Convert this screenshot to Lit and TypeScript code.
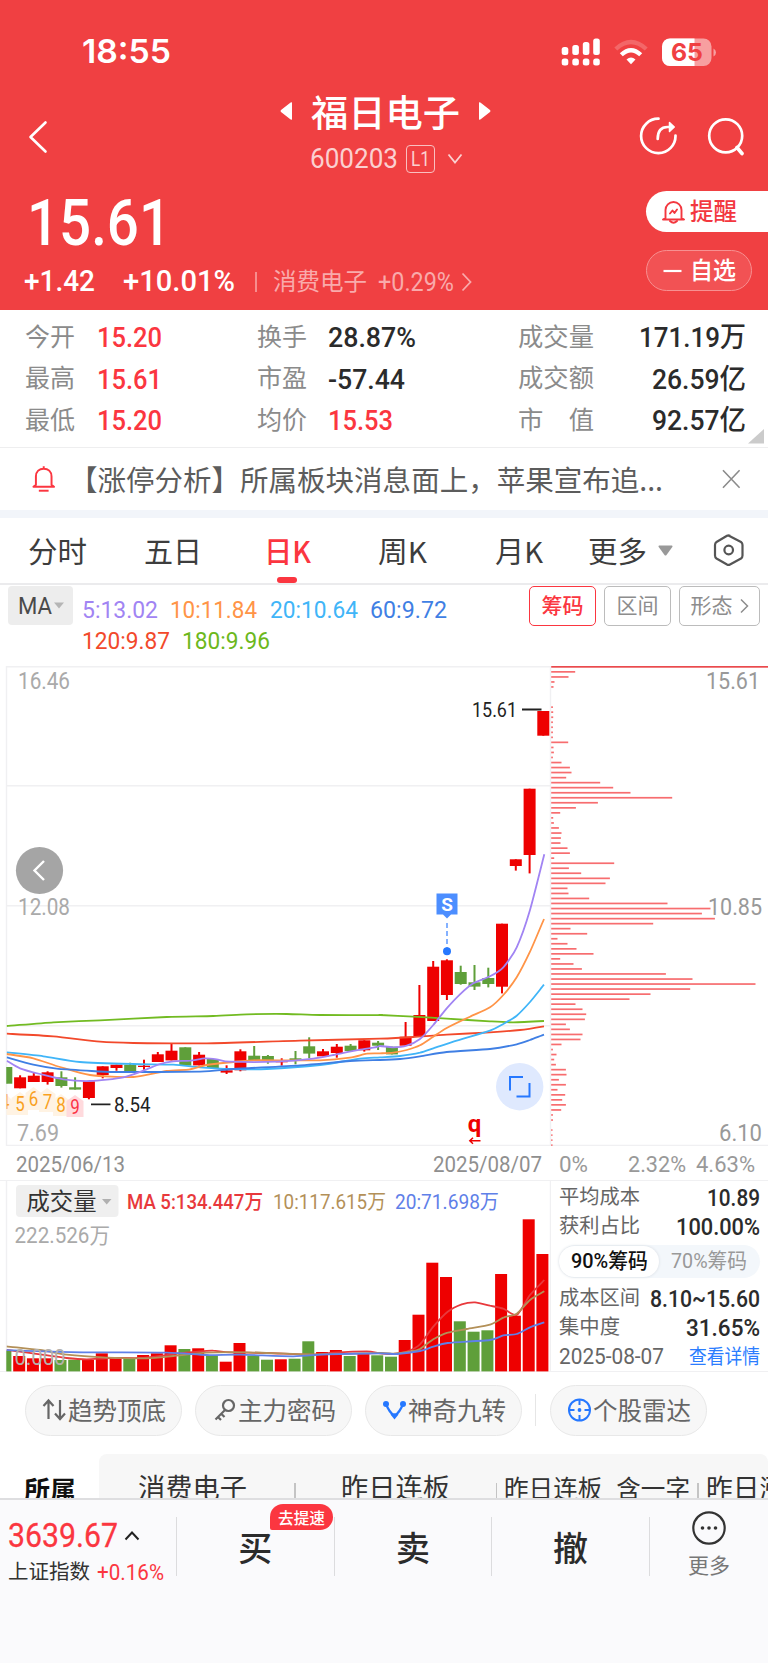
import { LitElement, html, svg, css } from "lit";
import { customElement, property, query } from "lit/decorators.js";

/** One line of text, condensed or widened to an exact advance width. */
@customElement("fit-text")
class FitText extends LitElement {
  static styles = css`
    :host { display: inline-block; white-space: nowrap; flex: none; }
    .t { display: inline-block; transform-origin: left center; white-space: pre; }
  `;
  @property({ type: Number }) w = 0;
  @property() text = "";
  @query(".t") span!: HTMLElement;
  updated() {
    const natural = this.span.getBoundingClientRect().width / (this.scale || 1);
    if (natural && this.w) {
      this.scale = this.w / natural;
      this.span.style.transform = `scaleX(${this.scale})`;
      this.span.style.width = `${this.w}px`;
    }
  }
  private scale = 1;
  render() {
    return html`<span class="t">${this.text}</span>`;
  }
}

const t = (text: string, w: number, cls = "") => html`<fit-text class=${cls} .w=${w} .text=${text}></fit-text>`;

type Candle = [up: number, top: number, bottom: number, high: number, low: number];

const PITCH = 13.77;
const cx = (i: number) => 6.3 + i * PITCH;

const A = (up: number, t: number, b: number, h = t, l = b): Candle => [up, 990 + t / 3, 990 + b / 3, 990 + h / 3, 990 + l / 3];
const B = (up: number, t: number, b: number, h = t, l = b): Candle => [up, 900 + t / 3, 900 + b / 3, 900 + h / 3, 900 + l / 3];
const C = (up: number, t: number, b: number, h = t, l = b): Candle => [up, 660 + t / 3, 660 + b / 3, 660 + h / 3, 660 + l / 3];

const candles: Candle[] = [
  A(0, 231, 281), A(1, 262, 295, 256), A(1, 257, 276, 247), A(1, 247, 276, 244, 284), A(0, 262, 288, 244, 293),
  A(0, 292, 299, 262), A(1, 274, 324, 274, 328), A(1, 229, 255, 229, 265), A(1, 224, 234, 224, 242), A(0, 224, 246, 218),
  A(1, 227, 231, 209, 239), A(1, 193, 216, 186), A(1, 182, 211, 161), A(0, 172, 227), A(1, 194, 226, 186),
  A(0, 207, 234), A(1, 241, 248, 226, 252), A(1, 184, 241, 178, 244), A(0, 197, 210, 168), A(0, 198, 213, 195, 221),
  A(1, 213, 217, 205, 227), A(0, 205, 211, 183, 223), A(0, 169, 191, 142, 205), A(1, 184, 199, 177), A(1, 170, 189, 162, 203),
  A(0, 167, 183, 162), A(1, 151, 181, 151, 185), A(0, 158, 167, 153, 180), A(0, 170, 193),
  B(1, 410, 437, 366), B(1, 345, 410, 255), B(1, 200, 363, 183), B(1, 181, 285, 178, 300), B(0, 216, 252, 197, 254),
  B(0, 247, 260, 195, 270), B(0, 234, 252, 203, 262), B(1, 71, 260, 71, 280),
  C(1, 598, 618, 598, 632), C(1, 386, 585, 386, 640), C(1, 153, 227),
];

type P = [number, number];
const left = (y0: number, pts: P[]): P[] => pts.map(([x, y]) => [x / 3, y0 + y / 3]);
const right = (y0: number, pts: P[]): P[] => pts.map(([x, y]) => [380 + x / 3, y0 + y / 3]);

/** Catmull-Rom path through the points, with a low tension. */
const smooth = (p: P[]) => {
  let d = `M${p[0][0].toFixed(1)} ${p[0][1].toFixed(1)}`;
  for (let i = 0; i < p.length - 1; i++) {
    const a = p[Math.max(0, i - 1)], b = p[i], c = p[i + 1], e = p[Math.min(p.length - 1, i + 2)];
    const k = 0.12;
    d += `C${(b[0] + (c[0] - a[0]) * k).toFixed(1)} ${(b[1] + (c[1] - a[1]) * k).toFixed(1)} ${(c[0] - (e[0] - b[0]) * k).toFixed(1)} ${(c[1] - (e[1] - b[1]) * k).toFixed(1)} ${c[0].toFixed(1)} ${c[1].toFixed(1)}`;
  }
  return d;
};

const maLines: { color: string; pts: P[] }[] = [
  { color: "#72bb22", pts: [...left(990, [[20, 108], [160, 97], [300, 91], [500, 81], [640, 78], [740, 73], [860, 72], [960, 75], [1140, 75]]), ...right(900, [[0, 345], [100, 350], [200, 356], [330, 364], [400, 367], [492, 363]])] },
  { color: "#f2492b", pts: [...left(990, [[20, 131], [160, 139], [300, 155], [400, 159], [620, 160], [900, 152]]), ...right(900, [[0, 416], [100, 411], [200, 404], [330, 397], [420, 390], [492, 379]])] },
  { color: "#40b5f8", pts: [...left(990, [[20, 187], [130, 199], [240, 216], [400, 222], [520, 224], [600, 232], [700, 237], [800, 237], [960, 225], [1080, 206]]), ...right(900, [[0, 472], [60, 468], [120, 458], [160, 445], [230, 422], [330, 392], [370, 372], [410, 347], [450, 306], [492, 254]])] },
  { color: "#ff9447", pts: [...left(990, [[20, 192], [100, 205], [180, 231], [270, 255], [400, 261], [500, 243], [570, 238], [620, 225], [700, 216], [760, 211], [960, 211], [1050, 203], [1100, 191]]), ...right(900, [[0, 460], [40, 458], [80, 450], [120, 436], [160, 410], [200, 384], [270, 350], [330, 322], [370, 285], [410, 232], [450, 155], [492, 57]])] },
  { color: "#3f7fe4", pts: [...left(990, [[20, 202], [100, 224], [170, 236], [260, 242], [350, 246], [600, 245], [700, 237], [900, 226], [1050, 213]]), ...right(900, [[0, 480], [60, 477], [120, 469], [200, 456], [330, 447], [410, 433], [450, 420], [492, 404]])] },
  { color: "#a184f3", pts: [...left(990, [[20, 212], [60, 235], [120, 252], [190, 268], [270, 273], [370, 262], [430, 242], [480, 222], [520, 214], [570, 212], [615, 205], [650, 208], [690, 215], [830, 215], [940, 206], [1000, 195], [1080, 179], [1130, 171]]), ...right(900, [[0, 438], [40, 442], [80, 437], [120, 417], [160, 375], [200, 325], [240, 283], [280, 250], [330, 229], [370, 202], [410, 142], [450, 30]]), [544.3, 854.3]] },
];

const chips = [
  1170, 586, 566, 524, 521, 0, 0, 0, 519, 520, 520, 519, 519, 519, 519, 565, 521, 522, 519, 545, 570, 575, 559, 661, 700, 752, 877, 654, 588, 541,
  520, 522, 537, 545, 543, 542, 563, 570, 523, 703, 567, 604, 690, 677, 563, 566, 628, 863, 992, 966, 1005, 820, 572, 622, 533, 563, 590, 641, 541, 581,
  606, 858, 938, 1127, 931, 812, 749, 587, 608, 619, 615, 558, 570, 608, 602, 545, 519, 530, 523, 528, 558, 560, 537, 558, 533, 556, 547, 558, 544, 519,
  519, 0, 518, 518, 518, 518,
];

const volumes: number[] = [
  572, 588, 595, 595, 600, 599, 600, 580, 597, 597, 585, 580, 556, 567, 565, 586, 605, 549, 587, 599, 598, 596, 544, 576, 570, 588, 582, 586, 590,
  540, 464, 308, 351, 484, 515, 511, 342, 467, 178, 282,
].map((v) => 1160 + v / 3);

const volLines: { color: string; pts: P[] }[] = [
  { color: "#e8393c", pts: [...left(1160, [[20, 570], [60, 575], [120, 583], [200, 594], [260, 598], [330, 594], [420, 594], [480, 588], [520, 582], [600, 574], [640, 572], [690, 577], [800, 579], [940, 584], [1000, 578], [1100, 574]]), ...right(1150, [[0, 610], [40, 612], [80, 605], [120, 583], [160, 530], [203, 485], [245, 463], [285, 457], [330, 467], [370, 476], [410, 495], [450, 435], [493, 390]])] },
  { color: "#b39058", pts: [...left(1160, [[20, 559], [120, 570], [200, 584], [320, 593], [440, 595], [520, 588], [620, 578], [740, 577], [940, 583]]), ...right(1150, [[0, 609], [40, 611], [90, 605], [120, 597], [160, 568], [203, 548], [260, 537], [330, 524], [370, 503], [410, 491], [450, 450], [493, 424]])] },
  { color: "#5f80e8", pts: [...left(1160, [[20, 570], [60, 572], [250, 577], [500, 578], [620, 585], [720, 584], [880, 589], [980, 583]]), ...right(1150, [[0, 610], [50, 612], [120, 603], [160, 590], [203, 579], [330, 570], [370, 556], [410, 552], [450, 532], [493, 517]])] },
];

const RED = "#ee0000";
const GREEN = "#5f9f3a";

const klineChart = () => html`<svg class="block" width="768" height="480" viewBox="0 666 768 480">
  <path d="M6.5 666V1146M550.5 666V1146M6 666.8H551M6 785.8H551M6 905.8H551M6 1025.8H551M6 1145.5H768" stroke="#f0f0f2" stroke-width="1.4" fill="none" />
  ${chips.map((e, i) => (e ? svg`<rect x="551.2" y=${(666 + i * 5.035).toFixed(1)} width=${((e - 514) / 3).toFixed(1)} height="1.7" fill=${i === 0 ? "#ea4a4d" : "#f76d6f"} />` : null))}
  <g class="num" font-size="23" fill="#aaaaaa">
    <text x="18" y="688.5" textLength="52" lengthAdjust="spacingAndGlyphs">16.46</text>
    <text x="18" y="915" textLength="52" lengthAdjust="spacingAndGlyphs">12.08</text>
    <text x="17" y="1141" textLength="42" lengthAdjust="spacingAndGlyphs">7.69</text>
    <text x="706" y="689" textLength="54" lengthAdjust="spacingAndGlyphs" fill="#999">15.61</text>
    <text x="708" y="915" textLength="54" lengthAdjust="spacingAndGlyphs" fill="#999">10.85</text>
    <text x="719" y="1141" textLength="43" lengthAdjust="spacingAndGlyphs" fill="#999">6.10</text>
  </g>
  <clipPath id="plot"><rect x="6.5" y="660" width="545" height="490" /></clipPath>
  <g clip-path="url(#plot)">
    ${candles.map(([up, top, bottom, high, low], i) => svg`
      <rect x=${(cx(i) - 1).toFixed(1)} y=${high.toFixed(1)} width="2" height=${(low - high).toFixed(1)} fill=${up ? RED : GREEN} />
      <rect x=${(cx(i) - 6).toFixed(1)} y=${top.toFixed(1)} width="12" height=${(bottom - top).toFixed(1)} fill=${up ? RED : GREEN} />`)}
    <g fill="#fff3e3">
      <path d="M-1 1100L6 1094L12 1100V1115H-1Z" />
      <path d="M11.5 1098L20 1092L28 1098V1115H11.5Z" />
      <path d="M25.5 1093L33.5 1087L41.5 1093V1110H25.5Z" />
      <path d="M39 1094L47 1088L55.500 1094V1112H39Z" />
      <path d="M53 1100L61 1094L69 1100V1116H53Z" />
      <path d="M66.500 1101L75 1095L83.500 1101V1117H66.500Z" fill="#ffdadd" />
    </g>
    <g class="num" font-size="20.500" fill="#f9a11e">
      <text x="0" y="1108.500" textLength="9.500" lengthAdjust="spacingAndGlyphs">4</text>
      <text x="15.200" y="1110.500" textLength="9.500" lengthAdjust="spacingAndGlyphs">5</text>
      <text x="28.800" y="1106" textLength="9.500" lengthAdjust="spacingAndGlyphs">6</text>
      <text x="42.800" y="1108.500" textLength="9.500" lengthAdjust="spacingAndGlyphs">7</text>
      <text x="56.200" y="1111.500" textLength="9.500" lengthAdjust="spacingAndGlyphs">8</text>
      <text x="70.200" y="1113.500" textLength="9.500" lengthAdjust="spacingAndGlyphs" fill="#fb3345">9</text>
    </g>
    ${maLines.map((l) => svg`<path d=${smooth(l.pts)} fill="none" stroke=${l.color} stroke-width="1.8" stroke-linejoin="round" />`)}
  </g>
  <path d="M91 1104.400H110.500M522 709.500H541.500" stroke="#222" stroke-width="1.800" />
  <g class="num" font-size="21" fill="#222">
    <text x="114" y="1112" textLength="36.500" lengthAdjust="spacingAndGlyphs">8.54</text>
    <text x="472" y="717" textLength="45" lengthAdjust="spacingAndGlyphs">15.61</text>
  </g>
  <circle cx="39.500" cy="870.500" r="23.600" fill="#a5a5a5" />
  <path d="M44 861L34.500 870.500L44 880" stroke="#fff" stroke-width="2.400" fill="none" />
  <path d="M436.500 893.500H457.500V914.500H451L447 918.500L443 914.500H436.500Z" fill="#4c8eff" />
  <text class="num" x="447" y="911" font-size="19" font-weight="700" fill="#fff" text-anchor="middle">S</text>
  <path d="M447 923V948" stroke="#5c98ff" stroke-width="1.500" stroke-dasharray="5 3" />
  <circle cx="447" cy="951.300" r="4" fill="#2678ff" />
  <circle cx="519.700" cy="1086.700" r="23.700" fill="#dfe9fe" />
  <path d="M510 1090.500V1077H523M516.500 1096.500H529.500V1083" stroke="#2678ff" stroke-width="2" fill="none" />
  <text class="num" x="474.500" y="1132" font-size="24" font-weight="700" fill=${RED} text-anchor="middle">q</text>
  <path d="M480.500 1140.800H470M473 1137.800L469.800 1140.800L473 1143.800" stroke=${RED} stroke-width="1.500" fill="none" />
</svg>`;

const volumeChart = () => html`<svg class="block" width="551" height="191" viewBox="0 1181 551 191">
  <path d="M6.500 1181V1372M550.500 1181V1372" stroke="#f0f0f2" stroke-width="1.400" />
  <clipPath id="vplot"><rect x="6.300" y="1181" width="545" height="191" /></clipPath>
  <g clip-path="url(#vplot)">
    ${volumes.map((y, i) => svg`<rect x=${(cx(i) - 6.9).toFixed(1)} y=${y.toFixed(1)} width="12" height=${(1371.4 - y).toFixed(1)} fill=${candles[i][0] ? RED : GREEN} />`)}
    ${volLines.map((l) => svg`<path d=${smooth(l.pts)} fill="none" stroke=${l.color} stroke-width="1.800" stroke-linejoin="round" />`)}
  </g>
  <rect x="16" y="1185" width="102.500" height="32" rx="4" fill="#efefef" />
  <path d="M102 1199H111.500L106.700 1204.500Z" fill="#b0b0b0" />
  <text class="cjk" x="26.500" y="1209.500" font-size="23.500" fill="#333" textLength="70" lengthAdjust="spacingAndGlyphs">成交量</text>
  <g class="mix" font-size="20.500">
    <text x="127" y="1209" fill="#e8393c" font-weight="500" textLength="136" lengthAdjust="spacingAndGlyphs">MA 5:134.447万</text>
    <text x="273" y="1209" fill="#b39058" textLength="113" lengthAdjust="spacingAndGlyphs">10:117.615万</text>
    <text x="395" y="1209" fill="#5f80e8" textLength="104" lengthAdjust="spacingAndGlyphs">20:71.698万</text>
    <text x="14.500" y="1243" font-size="21.500" fill="#aaa" textLength="95.500" lengthAdjust="spacingAndGlyphs">222.526万</text>
    <text x="14.500" y="1364.500" font-size="21.500" fill="#b4b0ac" textLength="51" lengthAdjust="spacingAndGlyphs">0.000</text>
  </g>
</svg>`;

@customElement("app-root")
class AppRoot extends LitElement {
  static styles = css`
    :host {
      display: block; width: 768px; height: 1663px; overflow: hidden; background: #fff; color: #333;
      font-family: Roboto, "Noto Sans CJK SC", sans-serif;
    }
    * { box-sizing: border-box; }
    .num { font-family: Roboto, sans-serif; }
    .mix { font-family: Roboto, "Noto Sans CJK SC", sans-serif; }
    .cjk { font-family: "Noto Sans CJK SC", sans-serif; }
    .block { display: block; }
    fit-text { line-height: 1; }
    .row { display: flex; align-items: center; }

    .head { height: 310px; background: #f04042; color: #fff; }
    .status { height: 76px; padding: 27px 52px 0 82px; justify-content: space-between; }
    .clock { font: 600 33px/1 Inter, sans-serif; }
    .nav { height: 105px; padding: 0 24px 0 28px; justify-content: space-between; align-items: flex-start; }
    .back { margin-top: 44px; }
    .titles { display: flex; flex-direction: column; align-items: center; margin-left: 62px; padding: 14px 0 0 21px; width: 260px; }
    .title { gap: 18px; height: 42px; }
    .name { font: 500 37px/42px "Noto Sans CJK SC", sans-serif; }
    .code { margin-top: 6px; padding-left: 3px; height: 42px; color: #fbd0d0; font-size: 28px; }
    .lv { width: 29px; height: 28px; border: 1.500px solid #f9c0c0; border-radius: 4px; font-size: 21px; display: flex; align-items: center; justify-content: center; margin: 0 12px 0 8px; }
    .tools { gap: 29px; padding-top: 40px; }
    .quote { display: flex; justify-content: space-between; }
    .price { font-size: 64px; font-weight: 500; height: 63px; margin: 11px 0 0 27px; display: block; }
    .delta { font-size: 29.500px; font-weight: 500; margin: 10px 0 0 24px; height: 34px; }
    .gap30 { margin-left: 28px; }
    .bar { width: 1.500px; height: 20px; background: #f78d8e; margin: 0 16px 0 20px; }
    .sector { color: #f9aaab; font-weight: 400; font-size: 24px; }
    .pct { color: #f9aaab; font-weight: 400; font-size: 26px; margin: 0 7px 0 11px; }
    .side { display: flex; flex-direction: column; gap: 18px; padding-top: 10px; width: 122px; }
    .remind { height: 41px; background: #fff; border-radius: 21px 0 0 21px; color: #f3373f; padding: 1px 0 0 16px; font-weight: 500; font-size: 24px; gap: 5px; }
    .pick { height: 41px; width: 106px; background: #f25254; border: 1.500px solid #f79091; border-radius: 21px; padding-left: 16px; font-weight: 500; font-size: 24px; gap: 8px; }

    .stats { position: relative; height: 138px; border-bottom: 1.500px solid #eeeeef; padding: 6px 22px 0 25px; display: grid; grid-template-columns: 72px 160px 71px 190px 100px 1fr; grid-template-rows: repeat(3, 41.500px); align-items: center; }
    .lab { font: 400 25px/1 "Noto Sans CJK SC", sans-serif; color: #8b8b8b; margin-top: -3px; }
    .val { font-size: 28px; font-weight: 500; color: #2b2b2b; margin-top: 3px; }
    .val.up { color: #fb3640; }
    .end { justify-self: end; }
    .fold { position: absolute; left: 748px; top: 119px; }
    .notice { height: 62px; padding: 0 27px 0 32px; font: 400 28.700px/1 "Noto Sans CJK SC", sans-serif; color: #5c5c5c; }
    .ntext { margin-left: 14px; width: 653px; flex: none; }
    .band { height: 8px; background: #f2f5fa; }

    .tabs { height: 67px; border-bottom: 2px solid #ebebed; padding-left: 28px; font: 400 29px/1 "Noto Sans CJK SC", sans-serif; color: #3d3d3d; align-items: stretch; }
    .tab { position: relative; width: 116px; display: flex; align-items: center; padding-bottom: 1px; }
    .t2 { width: 120px; } .t3 { width: 114px; } .t4 { width: 117px; } .t5 { width: 93px; } .t6 { width: 124px; }
    .on { color: #fb3640; font-weight: 500; }
    .on::after { content: ""; position: absolute; left: 13px; bottom: 0; width: 20px; height: 6px; border-radius: 3px; background: #fb3640; }
    .tri { margin-left: 11px; }

    .ma { display: flex; height: 81px; padding: 1px 8px 0; }
    .chip { width: 65px; height: 39px; background: #ededed; border-radius: 4px; padding-left: 10px; font-size: 24px; color: #4a4a4a; gap: 2px; }
    .mas { display: grid; grid-template-rows: 30.500px 30.500px; align-items: center; margin: 9px 0 0 9px; font-size: 24.500px; width: 448px; align-content: start; }
    .mas .row { gap: 12.500px; }
    .m5 { color: #a184f3; } .m10 { color: #ff9447; } .m20 { color: #40b5f8; } .m60 { color: #3f7fe4; } .m120 { color: #f2492b; } .m180 { color: #6cb81c; }
    .btns { display: flex; gap: 8px; align-items: flex-start; }
    .btn { height: 40px; width: 67px; border: 1.500px solid #bcbcbc; border-radius: 5px; color: #8d8d8d; font-size: 21px; display: flex; align-items: center; justify-content: center; gap: 7px; }
    .btn.act { border-color: #fb3640; color: #fb3640; font-weight: 500; }
    .btn.wide { width: 81px; }

    .dates { height: 35px; border-bottom: 1.500px solid #f0f0f2; font-size: 22.500px; color: #8f8f8f; padding: 3px 0 0 16px; }
    .d2 { margin-left: 308px; } .p0 { margin-left: 17px; color: #999; } .p1 { margin-left: 40px; color: #999; } .p2 { margin-left: 10px; color: #999; }

    .lower { display: flex; height: 191px; border-bottom: 1.500px solid #f0f0f2; }
    .cost { width: 217px; padding: 1px 8px 0 8px; }
    .line { display: flex; justify-content: space-between; align-items: center; height: 29.500px; font-size: 20px; color: #666; }
    .cv { font-size: 23.500px; font-weight: 500; color: #2b2b2b; margin-top: 3px; }
    .toggle { display: flex; align-items: center; height: 33px; border-radius: 17px; background: #f3f7fb; margin: 4px 0 5px; font-size: 21px; color: #999; }
    .pill { width: 100px; height: 31px; border-radius: 16px; background: #fff; box-shadow: 0 0 3px #d5dae0; color: #111; font-weight: 500; padding-left: 12px; display: flex; align-items: center; margin-right: 12px; }
    .date { font-size: 22px; }
    .link { color: #2b7dff; }

    .tags { padding: 13px 0 0 25px; height: 82px; align-items: flex-start; }
    .tag { width: 157px; height: 51px; border: 1.500px solid #e8e8e8; background: #f7f7f7; border-radius: 26px; color: #666; font: 400 24.500px/1 "Noto Sans CJK SC", sans-serif; display: flex; align-items: center; margin-right: 13px; padding: 0 0 1px 16px; gap: 1px; }
    .vr { width: 1px; height: 32px; background: #e6e6e6; margin: 9px 14px 0 0; }
    .belong { display: flex; height: 44px; overflow: hidden; }
    .own { width: 99px; padding: 22px 0 0 24px; font: 700 26px/1 "Noto Sans CJK SC", sans-serif; color: #111; }
    .list { flex: none; width: 669px; height: 44px; background: #f7f7f7; border-radius: 8px 8px 0 0; display: flex; padding-top: 19px; overflow: hidden; font: 400 27px/1 "Noto Sans CJK SC", sans-serif; color: #333; align-items: flex-start; }
    .c1 { margin-left: 39px; } .c2 { margin-left: 45px; } .c3 { margin-left: 7px; font-size: 25px; margin-top: 2px; } .c4 { margin-left: 7px; font-size: 26px; margin-top: 1px; }
    .cs { flex: none; width: 1.500px; height: 30px; background: #c4c4c4; margin: 10px 0 0 47px; } .cs.b { margin-left: 46px; } .cs.c { margin-left: 7px; }

    .foot { display: flex; height: 165px; background: #fafafc; border-top: 2px solid #dedee0; }
    .index { width: 176px; padding: 20px 0 0 8px; }
    .iv { font-size: 32.500px; font-weight: 400; color: #fb3640; gap: 6px; height: 32px; -webkit-text-stroke: .3px #fb3640; }
    .il { margin-top: 8px; gap: 7px; height: 24px; font-size: 20.500px; }
    .ip { font-size: 22.500px; color: #fb3640; }
    .act-c { position: relative; width: 157.800px; height: 59px; margin-top: 17px; border-left: 1px solid #dcdcde; display: flex; align-items: center; justify-content: center; font: 500 34px/1 "Noto Sans CJK SC", sans-serif; color: #2b2b2b; }
    .badge { position: absolute; left: 93px; top: -13px; width: 63px; height: 26px; border-radius: 13px 13px 13px 2px; background: #fb3640; color: #fff; font-size: 16px; display: flex; align-items: center; justify-content: center; padding-bottom: 1px; }
    .more { width: 119px; height: 59px; margin-top: 17px; border-left: 1px solid #dcdcde; display: flex; flex-direction: column; align-items: center; font: 400 21px/1 "Noto Sans CJK SC", sans-serif; color: #777; gap: 8px; }
    .more svg { margin-top: -7px; flex: none; }
  `;

  render() {
    return html`
      <div class="head">
        <div class="row status">
          ${t("18:55", 89, "clock")}
          <svg width="156" height="30" viewBox="560 36 156 30">
            <g fill="#fff">
              <rect x="561.700" y="46" width="6.600" height="8" rx="2.500" /><rect x="572.300" y="44" width="6.600" height="10" rx="2.500" /><rect x="582.800" y="41" width="6.600" height="13" rx="2.500" /><rect x="593.200" y="37.500" width="6.600" height="16.500" rx="2.500" />
              <rect x="561.700" y="57.500" width="6.600" height="7" rx="2.500" /><rect x="572.300" y="57.500" width="6.600" height="7" rx="2.500" /><rect x="582.800" y="57.500" width="6.600" height="7" rx="2.500" /><rect x="593.200" y="57.500" width="6.600" height="7" rx="2.500" />
              <path d="M631 63.300L626.500 58.500Q631 54.500 635.500 58.500Z" />
            </g>
            <path d="M615.800 48Q631 34 646.200 48" stroke="#f36768" stroke-width="4.300" fill="none" />
            <path d="M621.300 53.800Q631 44.500 640.700 53.800" stroke="#fff" stroke-width="4.300" fill="none" />
            <rect x="662" y="37.500" width="49.500" height="27.500" rx="8" fill="#f79fa0" />
            <path d="M694.500 37.500H670A8 8 0 0 0 662 45.500V57A8 8 0 0 0 670 65H694.500Z" fill="#fff" />
            <path d="M713.500 47.500Q716 49 716 51.500Q716 54 713.500 55.500Z" fill="#f79fa0" />
            <text x="687" y="60" font-family="Inter" font-weight="700" font-size="24" fill="#f04042" text-anchor="middle" textLength="32" lengthAdjust="spacingAndGlyphs">65</text>
          </svg>
        </div>
        <div class="row nav">
          <svg class="back" width="20" height="34" viewBox="28 119.500 20 34"><path d="M45.500 122L30.500 136.500L45.500 151" stroke="#fff" stroke-width="2.600" fill="none" stroke-linecap="round" stroke-linejoin="round" /></svg>
          <div class="titles">
            <div class="row title">
              <svg width="13" height="20" viewBox="0 0 13 20"><path d="M12 1.500V18.500Q11 19 10 18L1 11Q0 10 1 9L10 2Q11 1 12 1.500Z" fill="#fff" /></svg>
              ${t("福日电子", 149, "name")}
              <svg width="13" height="20" viewBox="0 0 13 20"><path d="M1 1.500V18.500Q2 19 3 18L12 11Q13 10 12 9L3 2Q2 1 1 1.500Z" fill="#fff" /></svg>
            </div>
            <div class="row code">
              ${t("600203", 88)}
              <div class="lv">${t("L1", 19)}</div>
              <svg width="16" height="12" viewBox="0 0 16 12"><path d="M1.500 1.500L8 9.500L14.500 1.500" stroke="#fbd0d0" stroke-width="1.800" fill="none" /></svg>
            </div>
          </div>
          <div class="row tools">
            <svg width="38" height="40" viewBox="638 116 38 40"><g stroke="#fff" stroke-width="2.700" fill="none" stroke-linecap="round" stroke-linejoin="round"><path d="M657.500 118.700A17.200 17.200 0 1 0 674.500 135.500" /><path d="M656.700 139C656.700 131 659.500 127 666.500 127H672" /><path d="M668.500 122.500L673.200 127L668.500 131.500Z" fill="#fff" stroke-width="1.500" /></g></svg>
            <svg width="38" height="40" viewBox="705 116 38 40"><g stroke="#fff" stroke-width="2.700" fill="none" stroke-linecap="round"><circle cx="724.700" cy="135.800" r="16.500" /><path d="M736 147.500L741 153.500" stroke-width="3.600" /></g></svg>
          </div>
        </div>
        <div class="quote">
          <div>
            ${t("15.61", 144, "price")}
            <div class="row delta">
              ${t("+1.42", 71)}${t("+10.01%", 112, "gap30")}
              <span class="bar"></span>
              ${t("消费电子", 94, "sector")}${t("+0.29%", 76, "pct")}
              <svg width="12" height="20" viewBox="0 0 12 20"><path d="M1.500 1.500L9.500 10L1.500 18.500" stroke="#f9aaab" stroke-width="1.800" fill="none" /></svg>
            </div>
          </div>
          <div class="side">
            <div class="row remind">
              <svg width="23" height="24" viewBox="0 0 23 24"><g stroke="#f3373f" stroke-width="1.900" fill="none" stroke-linejoin="round" stroke-linecap="round"><path d="M3.500 18V10A8 8 0 0 1 19.500 10V18L22 19.500H1L3.500 18Z" /><path d="M8 21Q11.500 24.500 15 21M8 13.500L10.500 10.500L12.500 13L15 9.500" /></g></svg>
              ${t("提醒", 47)}
            </div>
            <div class="row pick">
              <svg width="19" height="4" viewBox="0 0 19 4"><path d="M.5 2H18.500" stroke="#fff" stroke-width="2.200" /></svg>
              ${t("自选", 46)}
            </div>
          </div>
        </div>
      </div>

      <div class="stats">
        ${t("今开", 50, "lab")}${t("15.20", 65, "val up")}${t("换手", 50, "lab")}${t("28.87%", 88, "val")}${t("成交量", 76, "lab")}${t("171.19万", 107, "val end")}
        ${t("最高", 50, "lab")}${t("15.61", 65, "val up")}${t("市盈", 50, "lab")}${t("-57.44", 77, "val")}${t("成交额", 76, "lab")}${t("26.59亿", 94, "val end")}
        ${t("最低", 50, "lab")}${t("15.20", 65, "val up")}${t("均价", 50, "lab")}${t("15.53", 65, "val up")}${t("市　值", 76, "lab")}${t("92.57亿", 94, "val end")}
        <svg class="fold" width="16" height="15" viewBox="0 0 16 15"><path d="M16 0V14.500H0Z" fill="#cbcbcb" /></svg>
      </div>
      <div class="row notice">
        <svg width="24" height="28" viewBox="0 0 24 28"><g stroke="#fb3640" stroke-width="2" fill="none" stroke-linejoin="round"><path d="M4 20V11.500C4 6.500 7.500 3.500 12 3.500S20 6.500 20 11.500V20L22.500 22H1.500L4 20ZM12 3.500V1" /><path d="M7 26H17" /></g></svg>
        <div class="ntext">${t("【涨停分析】所属板块消息面上，苹果宣布追...", 594)}</div>
        <svg width="19" height="20" viewBox="0 0 19 20"><path d="M1 1L18 19M18 1L1 19" stroke="#8b8b8b" stroke-width="1.600" /></svg>
      </div>
      <div class="band"></div>

      <div class="row tabs">
        <div class="tab">${t("分时", 59)}</div>
        <div class="tab t2">${t("五日", 58)}</div>
        <div class="tab t3 on">${t("日K", 47)}</div>
        <div class="tab t4">${t("周K", 49)}</div>
        <div class="tab t5">${t("月K", 48)}</div>
        <div class="tab t6">${t("更多", 59)}<svg class="tri" width="15" height="11" viewBox="0 0 15 11"><path d="M1 .5H14Q15 1 14.300 2L8.500 10Q7.500 11 6.500 10L.7 2Q0 1 1 .5Z" fill="#999" /></svg></div>
        <svg width="32" height="65" viewBox="712 518 32 65"><g stroke="#555" stroke-width="2.200" fill="none" stroke-linejoin="round"><path d="M728.500 535.500L741 542Q742.500 543 742.500 545V555.500Q742.500 557.500 741 558.500L730 564.500Q728.500 565.300 727 564.500L716.500 558.500Q715 557.500 715 555.500V545Q715 543 716.500 542L727 535.800Q728.500 535 730 535.800" /><circle cx="728.700" cy="550" r="4.300" /></g></svg>
      </div>

      <div class="ma">
        <div class="row chip">${t("MA", 34)}<svg width="10" height="7" viewBox="0 0 10 7"><path d="M0 .5H10L5 6.500Z" fill="#b5b5b5" /></svg></div>
        <div class="mas">
          <div class="row">${t("5:13.02", 76, "m5")}${t("10:11.84", 87, "m10")}${t("20:10.64", 88, "m20")}${t("60:9.72", 77, "m60")}</div>
          <div class="row">${t("120:9.87", 88, "m120")}${t("180:9.96", 88, "m180")}</div>
        </div>
        <div class="btns">
          <div class="btn act">${t("筹码", 42)}</div>
          <div class="btn">${t("区间", 42)}</div>
          <div class="btn wide">${t("形态", 42)}<svg width="9" height="16" viewBox="0 0 9 16"><path d="M1 1.500L7.500 8L1 14.500" stroke="#8d8d8d" stroke-width="1.500" fill="none" /></svg></div>
        </div>
      </div>

      ${klineChart()}
      <div class="row dates">
        ${t("2025/06/13", 109)}${t("2025/08/07", 109, "d2")}${t("0%", 29, "p0")}${t("2.32%", 58, "p1")}${t("4.63%", 59, "p2")}
      </div>
      <div class="lower">
        ${volumeChart()}
        <div class="cost">
          <div class="line">${t("平均成本", 81)}${t("10.89", 53, "cv")}</div>
          <div class="line">${t("获利占比", 81)}${t("100.00%", 84, "cv")}</div>
          <div class="toggle"><div class="pill">${t("90%筹码", 77)}</div>${t("70%筹码", 76)}</div>
          <div class="line">${t("成本区间", 81)}${t("8.10~15.60", 110, "cv")}</div>
          <div class="line">${t("集中度", 61)}${t("31.65%", 74, "cv")}</div>
          <div class="line">${t("2025-08-07", 105, "date")}${t("查看详情", 71, "link")}</div>
        </div>
      </div>

      <div class="row tags">
        <div class="tag"><svg width="25" height="24" viewBox="0 0 25 24"><path d="M6.500 21V3M1.500 8L6.500 2.500L11.500 8M18 2V20M13 15.500L18 21L23 15.500" stroke="#666" stroke-width="2.200" fill="none" /></svg>${t("趋势顶底", 98)}</div>
        <div class="tag"><svg width="25" height="24" viewBox="0 0 25 24"><g stroke="#666" stroke-width="2.200" fill="none" stroke-linejoin="round"><circle cx="16.500" cy="7.500" r="5.500" /><path d="M13 12L3.500 21.500M9 15.500L12.500 19M5.500 18.500L9 22" /></g></svg>${t("主力密码", 98)}</div>
        <div class="tag"><svg width="25" height="24" viewBox="0 0 25 24"><path d="M4 6Q7 14 12.500 18Q18 14 21 6" stroke="#2678ff" stroke-width="2.200" fill="none" /><circle cx="4" cy="6" r="3" fill="#2678ff" /><circle cx="21" cy="6" r="3" fill="#2678ff" /><path d="M8.500 16.500Q12.500 14 16.500 16.500L12.500 21.500Z" fill="#2678ff" /></svg>${t("神奇九转", 98)}</div>
        <div class="vr"></div>
        <div class="tag"><svg width="25" height="24" viewBox="0 0 25 24"><g stroke="#2678ff" stroke-width="2" fill="none"><circle cx="12.500" cy="12" r="10.500" /><path d="M12.500 1.500V7M12.500 17V22.500M2 12H7.500M17.500 12H23" /></g><circle cx="12.500" cy="12" r="1.900" fill="#2678ff" /></svg>${t("个股雷达", 98)}</div>
      </div>

      <div class="belong">
        <div class="own">${t("所属", 52)}</div>
        <div class="list">
          ${t("消费电子", 109, "c1")}<span class="cs"></span>
          ${t("昨日连板", 109, "c2")}<span class="cs b"></span>
          ${t("昨日连板_含一字", 186, "c3")}<span class="cs c"></span>
          ${t("昨日涨停", 107, "c4")}
        </div>
      </div>

      <div class="foot">
        <div class="index">
          <div class="row iv">${t("3639.67", 110)}<svg width="16" height="10" viewBox="0 0 16 10"><path d="M1.500 8.500L8 1.500L14.500 8.500" stroke="#222" stroke-width="2" fill="none" /></svg></div>
          <div class="row il">${t("上证指数", 82)}${t("+0.16%", 67, "ip")}</div>
        </div>
        <div class="act-c">${t("买", 34)}<div class="badge">${t("去提速", 47)}</div></div>
        <div class="act-c">${t("卖", 34)}</div>
        <div class="act-c">${t("撤", 35)}</div>
        <div class="more">
          <svg width="36" height="36" viewBox="0 0 36 36"><circle cx="18" cy="18" r="15.700" stroke="#333" stroke-width="2.200" fill="none" /><g fill="#333"><circle cx="11.500" cy="18" r="1.800" /><circle cx="18" cy="18" r="1.800" /><circle cx="24.500" cy="18" r="1.800" /></g></svg>
          ${t("更多", 42)}
        </div>
      </div>
    `;
  }
}
